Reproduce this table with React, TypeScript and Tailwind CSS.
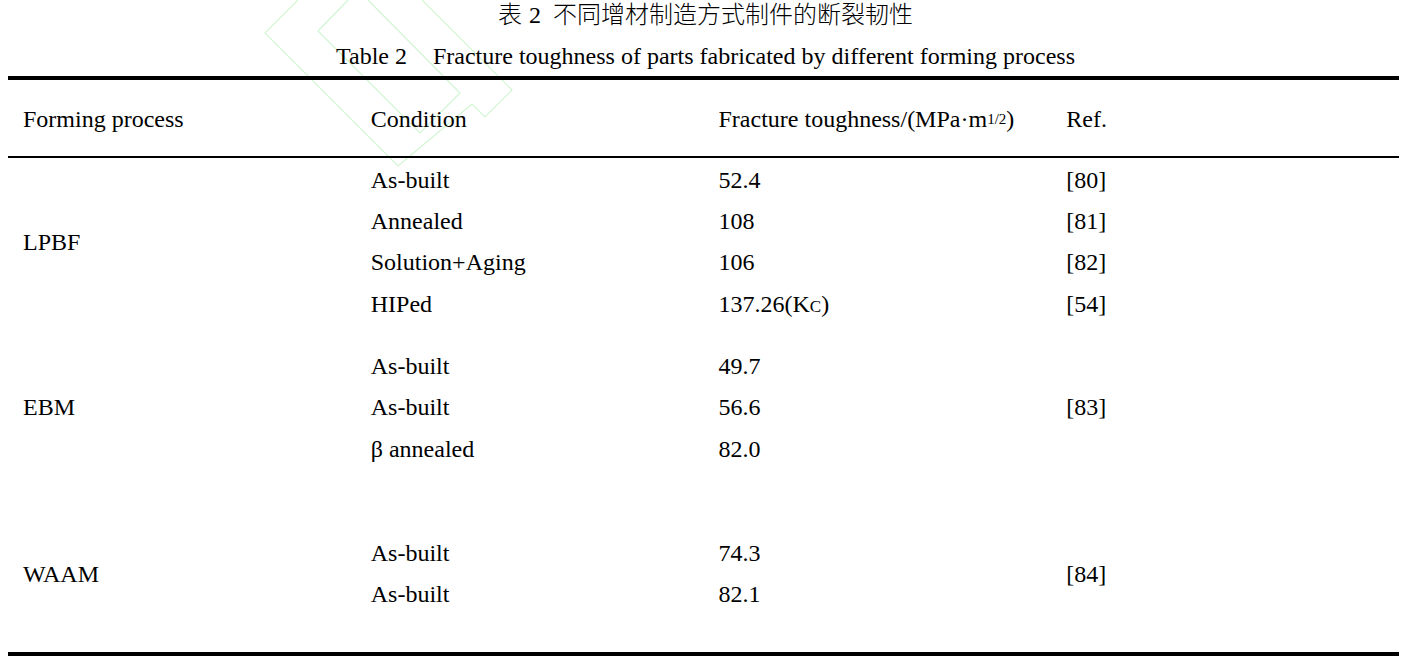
import React from "react";

const serif = { fontFamily: '"Liberation Serif", Tinos, "Times New Roman", Times, serif' };

type Group = {
  process: string;
  rows: { cond: React.ReactNode; val: React.ReactNode; ref?: string }[];
  ref?: string;
  pt: string;
  pb: string;
};

const ROW = "h-[41.33px] flex items-center";

export default function App() {
  const groups: Group[] = [
    {
      process: "LPBF",
      pt: "pt-[1px]",
      pb: "pb-[21px]",
      rows: [
        { cond: "As-built", val: "52.4", ref: "[80]" },
        { cond: "Annealed", val: "108", ref: "[81]" },
        { cond: "Solution+Aging", val: "106", ref: "[82]" },
        {
          cond: "HIPed",
          val: (
            <span>
              137.26(K<span className="text-[17px]">C</span>)
            </span>
          ),
          ref: "[54]",
        },
      ],
    },
    {
      process: "EBM",
      pt: "pt-0",
      pb: "pb-[63px]",
      ref: "[83]",
      rows: [
        { cond: "As-built", val: "49.7" },
        { cond: "As-built", val: "56.6" },
        { cond: "β annealed", val: "82.0" },
      ],
    },
    {
      process: "WAAM",
      pt: "pt-0",
      pb: "pb-[37px]",
      ref: "[84]",
      rows: [
        { cond: "As-built", val: "74.3" },
        { cond: "As-built", val: "82.1" },
      ],
    },
  ];

  const cjk = { fontFamily: '"Liberation Serif", "Noto Sans CJK SC", serif', fontWeight: 300 };

  return (
    <div className="relative w-[1411px] h-[667px] bg-white text-black overflow-hidden" style={serif}>
      <svg
        className="absolute left-0 top-0 pointer-events-none"
        width="560"
        height="180"
        viewBox="0 0 560 180"
        fill="none"
        stroke="#d2f5d2"
        strokeWidth="1.2"
      >
        <polyline points="298,0 265,33 398,166 472,104 485,117 512,90 422,0" />
        <polyline points="348,0 318,31 420,133 460,93 368,0" />
      </svg>

      <div className="relative">
        <div className="h-[28px] pt-[1px] flex items-center justify-center text-[24px] leading-none">
          <span className="leading-none" style={cjk}>表</span>
          <span className="ml-[7px] leading-none">2</span>
          <span className="ml-[12px] leading-none" style={cjk}>
            不同增材制造方式制件的断裂韧性
          </span>
        </div>
        <div className="mt-[14px] h-[28px] flex items-center justify-center text-[24px] leading-none">
          <span>Table 2</span>
          <span className="ml-[26px]">Fracture toughness of parts fabricated by different forming process</span>
        </div>
        <div className="h-[6px]" />

        <div className="ml-[8px] w-[1391px] border-t-[4px] border-b-[4px] border-black text-[24px] leading-none">
          <div className="grid grid-cols-4 h-[78px] items-center pt-[2px] border-b-[2px] border-black">
            <div className="pl-[15px]">Forming process</div>
            <div className="pl-[15px]">Condition</div>
            <div className="pl-[15px]">
              Fracture toughness/(MPa·m<sup className="text-[15px] relative top-[-3px]">1/2</sup>)
            </div>
            <div className="pl-[15px]">Ref.</div>
          </div>

          {groups.map((g, gi) => (
            <div key={gi} className={`grid grid-cols-4 ${g.pt} ${g.pb}`}>
              <div className="pl-[15px] flex items-center">{g.process}</div>
              <div className="pl-[15px] flex flex-col">
                {g.rows.map((r, i) => (
                  <div key={i} className={ROW}>{r.cond}</div>
                ))}
              </div>
              <div className="pl-[15px] flex flex-col">
                {g.rows.map((r, i) => (
                  <div key={i} className={ROW}>{r.val}</div>
                ))}
              </div>
              <div className="pl-[15px] flex flex-col justify-center">
                {g.ref ? (
                  <div className="flex items-center">{g.ref}</div>
                ) : (
                  g.rows.map((r, i) => (
                    <div key={i} className={ROW}>{r.ref}</div>
                  ))
                )}
              </div>
            </div>
          ))}
        </div>
      </div>
    </div>
  );
}
